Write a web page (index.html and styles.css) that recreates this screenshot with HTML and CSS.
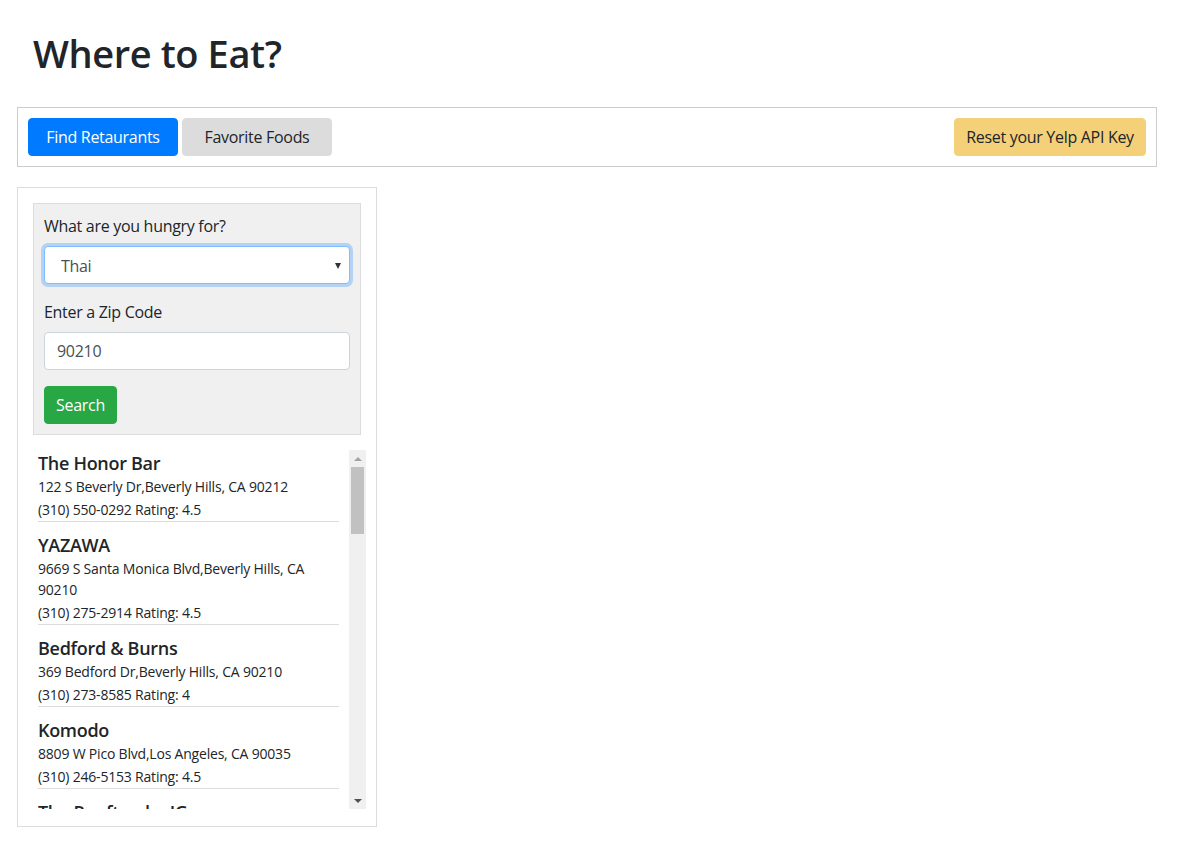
FILE: index.html
```html
<!DOCTYPE html>
<html lang="en">
<head>
<meta charset="utf-8">
<title>Where to Eat?</title>
<link rel="stylesheet" href="styles.css">
</head>
<body>
  <header class="page-header">
    <h1 class="title">Where to Eat?</h1>
  </header>

  <nav class="toolbar">
    <div class="toolbar-left">
      <button class="btn btn-primary">Find Retaurants</button>
      <button class="btn btn-light">Favorite Foods</button>
    </div>
    <button class="btn btn-warning">Reset your Yelp API Key</button>
  </nav>

  <section class="panel">
    <form class="search-form">
      <div class="form-group">
        <label class="form-label">What are you hungry for?</label>
        <div class="select-box">
          <span class="select-value">Thai</span>
          <span class="select-arrow"></span>
        </div>
      </div>
      <div class="form-group">
        <label class="form-label">Enter a Zip Code</label>
        <div class="text-input">90210</div>
      </div>
      <button type="button" class="btn btn-success">Search</button>
    </form>

    <div class="results">
      <div class="results-list">
        <div class="result">
          <h5 class="result-name">The Honor Bar</h5>
          <p class="result-line">122 S Beverly Dr,Beverly Hills, CA 90212</p>
          <p class="result-line phone">(310) 550-0292 Rating: 4.5</p>
        </div>
        <div class="result">
          <h5 class="result-name">YAZAWA</h5>
          <p class="result-line">9669 S Santa Monica Blvd,Beverly Hills, CA 90210</p>
          <p class="result-line phone">(310) 275-2914 Rating: 4.5</p>
        </div>
        <div class="result">
          <h5 class="result-name">Bedford &amp; Burns</h5>
          <p class="result-line">369 Bedford Dr,Beverly Hills, CA 90210</p>
          <p class="result-line phone">(310) 273-8585 Rating: 4</p>
        </div>
        <div class="result">
          <h5 class="result-name">Komodo</h5>
          <p class="result-line">8809 W Pico Blvd,Los Angeles, CA 90035</p>
          <p class="result-line phone">(310) 246-5153 Rating: 4.5</p>
        </div>
        <div class="result">
          <h5 class="result-name">The Rooftop by JG</h5>
          <p class="result-line">9850 Wilshire Blvd,Beverly Hills, CA 90210</p>
          <p class="result-line phone">(310) 860-6566 Rating: 4</p>
        </div>
      </div>
      <div class="scrollbar">
        <div class="scroll-btn"><span class="arrow-up"></span></div>
        <div class="scroll-track"><div class="scroll-thumb"></div></div>
        <div class="scroll-btn"><span class="arrow-down"></span></div>
      </div>
    </div>
  </section>
</body>
</html>
```

FILE: styles.css
```css
* { box-sizing: border-box; }

html, body {
  margin: 0;
  padding: 0;
  background: #ffffff;
}

body {
  font-family: "Segoe UI", "Open Sans", "Noto Sans", sans-serif;
  font-size: 16px;
  line-height: 1.5;
  color: #212529;
  letter-spacing: -0.3px;
}

.page-header {
  padding: 31px 0 0 33px;
  height: 107px;
}

.title {
  margin: 0;
  font-size: 38px;
  font-weight: 600;
  line-height: 1.2;
  letter-spacing: -0.4px;
}

.toolbar {
  margin-left: 17px;
  width: 1140px;
  border: 1px solid #cccccc;
  padding: 10px;
  display: flex;
  justify-content: space-between;
  align-items: center;
}

.toolbar-left {
  display: flex;
  gap: 4px;
}

.btn {
  font-family: inherit;
  font-size: 16px;
  letter-spacing: -0.3px;
  line-height: 24px;
  height: 38px;
  padding: 6px 12px;
  border: 1px solid transparent;
  border-radius: 4px;
  cursor: pointer;
  color: #212529;
  white-space: nowrap;
}

.btn-primary {
  background: #007bff;
  border-color: #007bff;
  color: #ffffff;
  width: 150px;
}

.btn-light {
  background: #dcdcdc;
  border-color: #dcdcdc;
  width: 150px;
}

.btn-warning {
  background: #f4d178;
  border-color: #f4d178;
  width: 192px;
  padding: 6px 0;
}

.btn-success {
  background: #28a745;
  border-color: #28a745;
  color: #ffffff;
  width: 73px;
  padding: 6px 0;
}

.panel {
  margin: 20px 0 0 17px;
  width: 360px;
  border: 1px solid #dddddd;
  padding: 15px 15px 17px 15px;
}

.search-form {
  background: #f0f0f0;
  border: 1px solid #dddddd;
  padding: 10px;
  margin: 0;
}

.form-group {
  margin-bottom: 16px;
}

.form-label {
  display: block;
  margin-bottom: 8px;
  line-height: 24px;
}

.select-box {
  height: 38px;
  background: #ffffff;
  border: 1px solid #80bdff;
  border-radius: 4px;
  box-shadow: 0 0 0 3px rgba(0, 123, 255, 0.25);
  padding: 7px 8px 5px 16px;
  display: flex;
  align-items: center;
  justify-content: space-between;
  color: #495057;
}

.select-arrow {
  width: 0;
  height: 0;
  border-left: 3.5px solid transparent;
  border-right: 3.5px solid transparent;
  border-top: 6px solid #333333;
}

.text-input {
  height: 38px;
  background: #ffffff;
  border: 1px solid #ced4da;
  border-radius: 4px;
  padding: 6px 12px;
  color: #495057;
}

.results {
  margin-top: 15px;
  width: 333px;
  height: 359px;
  display: flex;
}

.results-list {
  flex: 1;
  overflow: hidden;
  padding: 2px 10px 0 5px;
}

.result {
  border-bottom: 1px solid #dddddd;
  margin-bottom: 12px;
}

.result-name {
  margin: 0 0 1px 0;
  font-size: 18px;
  font-weight: 600;
  line-height: 23px;
}

.result-line {
  margin: 0;
  font-size: 14px;
  line-height: 21px;
  letter-spacing: -0.2px;
}

.result-line.phone {
  margin: 2px 0 1px 0;
}

.scrollbar {
  width: 17px;
  background: #f0f0f0;
  display: flex;
  flex-direction: column;
}

.scroll-btn {
  height: 17px;
  display: flex;
  align-items: center;
  justify-content: center;
}

.arrow-up {
  width: 0;
  height: 0;
  border-left: 4px solid transparent;
  border-right: 4px solid transparent;
  border-bottom: 4px solid #a3a3a3;
}

.arrow-down {
  width: 0;
  height: 0;
  border-left: 4px solid transparent;
  border-right: 4px solid transparent;
  border-top: 4px solid #505050;
}

.scroll-track {
  flex: 1;
  padding: 0 2px;
}

.scroll-thumb {
  height: 67px;
  background: #c1c1c1;
}
```
